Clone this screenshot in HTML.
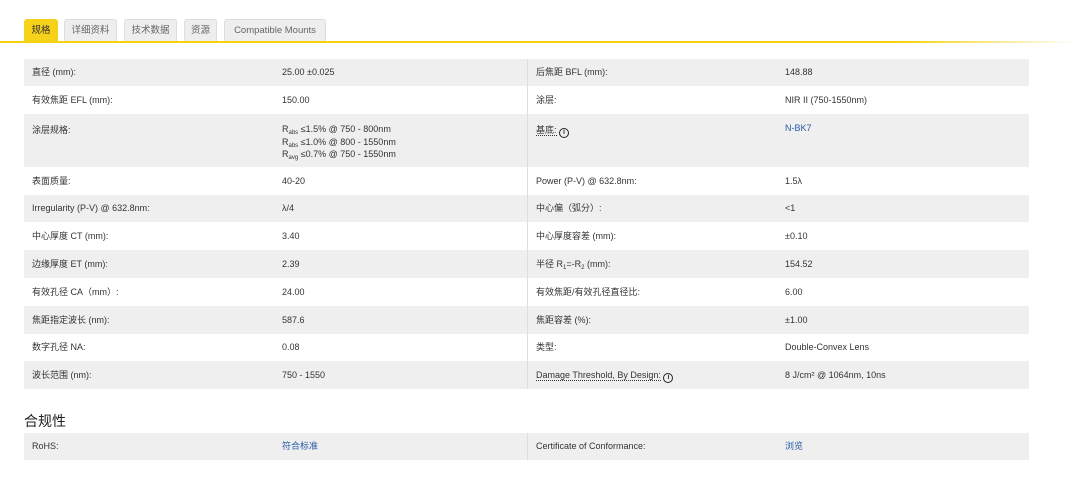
<!DOCTYPE html>
<html><head><meta charset="utf-8"><style>
*{margin:0;padding:0;box-sizing:border-box}
body{width:1078px;height:487px;background:#fff;font-family:"Liberation Sans","Noto Sans CJK SC",sans-serif;font-size:9px;color:#333;position:relative;overflow:hidden}
.tab{position:absolute;top:19px;height:23px;background:#eee;border:1px solid #ddd;border-bottom:none;border-radius:3px 3px 0 0;font-size:9.5px;color:#666;text-align:center;line-height:22px}
.tab.a{background:#f7d21a;border-color:#f7d21a;color:#333}
.line{position:absolute;top:41px;left:0;width:1078px;height:2px;background:linear-gradient(to right,#f5d10e 0,#f5d10e 900px,#fff 1078px)}
.row{position:absolute;left:24px;width:1005px}
.g{background:#efefef}
.row span{position:absolute;top:0}
.c1{left:8px}.c2{left:258px}.c3{left:512px}.c4{left:761px}
.dv{position:absolute;left:527px;width:1px;background:#ddd}
.blue{color:#2a5ba8}
.u{border-bottom:1px dotted #333}
.i{display:inline-block;width:10px;height:10px;border:1.5px solid #222;border-radius:50%;font-size:7px;line-height:7px;text-align:center;font-weight:bold;vertical-align:-1px}
sub{font-size:6px;line-height:0;vertical-align:-2px}
h3{position:absolute;left:24px;top:411px;font-size:14px;font-weight:normal;color:#222}
</style></head><body>
<div class="tab a" style="left:24px;width:34px">规格</div>
<div class="tab" style="left:64px;width:53px">详细资料</div>
<div class="tab" style="left:124px;width:53px">技术数据</div>
<div class="tab" style="left:184px;width:33px">资源</div>
<div class="tab" style="left:224px;width:102px">Compatible Mounts</div>
<div class="line"></div>

<div class="row g" style="top:59px;height:27px;line-height:27px"><span class="c1">直径 (mm):</span><span class="c2">25.00 ±0.025</span><span class="c3">后焦距 BFL (mm):</span><span class="c4">148.88</span></div>
<div class="row" style="top:86px;height:28px;line-height:28px"><span class="c1">有效焦距 EFL (mm):</span><span class="c2">150.00</span><span class="c3">涂层:</span><span class="c4">NIR II (750-1550nm)</span></div>
<div class="row g" style="top:114px;height:53px"><span class="c1" style="top:9px">涂层规格:</span><span class="c2" style="top:9px;line-height:12.5px">R<sub>abs</sub> ≤1.5% @ 750 - 800nm<br>R<sub>abs</sub> ≤1.0% @ 800 - 1550nm<br>R<sub>avg</sub> ≤0.7% @ 750 - 1550nm</span><span class="c3" style="top:9px"><span class="u" style="position:static">基底:</span> <span class="i" style="position:static">i</span></span><span class="c4 blue" style="top:9px">N-BK7</span></div>
<div class="row" style="top:167px;height:28px;line-height:28px"><span class="c1">表面质量:</span><span class="c2">40-20</span><span class="c3">Power (P-V) @ 632.8nm:</span><span class="c4">1.5λ</span></div>
<div class="row g" style="top:195px;height:27px;line-height:27px"><span class="c1">Irregularity (P-V) @ 632.8nm:</span><span class="c2">λ/4</span><span class="c3">中心偏（弧分）:</span><span class="c4">&lt;1</span></div>
<div class="row" style="top:222px;height:28px;line-height:28px"><span class="c1">中心厚度 CT (mm):</span><span class="c2">3.40</span><span class="c3">中心厚度容差 (mm):</span><span class="c4">±0.10</span></div>
<div class="row g" style="top:250px;height:28px;line-height:28px"><span class="c1">边缘厚度 ET (mm):</span><span class="c2">2.39</span><span class="c3">半径 R<sub>1</sub>=-R<sub>2</sub> (mm):</span><span class="c4">154.52</span></div>
<div class="row" style="top:278px;height:28px;line-height:28px"><span class="c1">有效孔径 CA（mm）:</span><span class="c2">24.00</span><span class="c3">有效焦距/有效孔径直径比:</span><span class="c4">6.00</span></div>
<div class="row g" style="top:306px;height:28px;line-height:28px"><span class="c1">焦距指定波长 (nm):</span><span class="c2">587.6</span><span class="c3">焦距容差 (%):</span><span class="c4">±1.00</span></div>
<div class="row" style="top:334px;height:27px;line-height:27px"><span class="c1">数字孔径 NA:</span><span class="c2">0.08</span><span class="c3">类型:</span><span class="c4">Double-Convex Lens</span></div>
<div class="row g" style="top:361px;height:28px;line-height:28px"><span class="c1">波长范围 (nm):</span><span class="c2">750 - 1550</span><span class="c3"><span class="u" style="position:static">Damage Threshold, By Design:</span> <span class="i" style="position:static">i</span></span><span class="c4">8 J/cm² @ 1064nm, 10ns</span></div>
<div class="dv" style="top:59px;height:330px"></div>

<h3>合规性</h3>
<div class="row g" style="top:433px;height:27px;line-height:27px"><span class="c1">RoHS:</span><span class="c2 blue">符合标准</span><span class="c3">Certificate of Conformance:</span><span class="c4 blue">浏览</span></div>
<div class="dv" style="top:433px;height:27px"></div>
</body></html>
